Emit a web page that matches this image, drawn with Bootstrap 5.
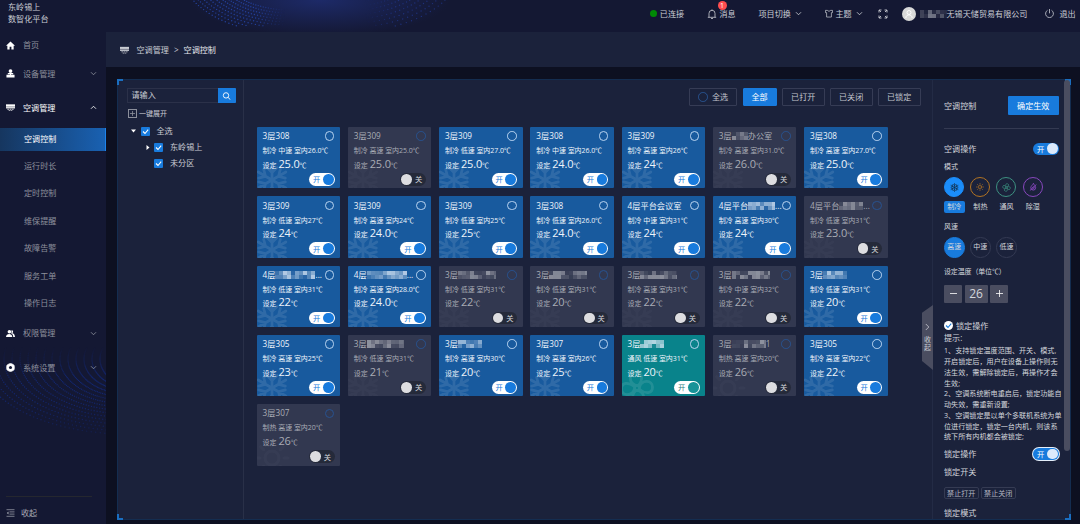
<!DOCTYPE html>
<html lang="zh-CN">
<head>
<meta charset="utf-8">
<title>空调控制</title>
<meta name="viewport" content="width=device-width, initial-scale=1">
<link href="https://cdn.jsdelivr.net/npm/bootstrap@5.3.0/dist/css/bootstrap.min.css" rel="stylesheet">
<style>
:root{--blue:#187bdd;--panel:#1b223b;--line:#303650}
html,body{height:100%}
body{background:#0d1021;color:#c9ccd3;font:8.1px/12px "Open Sans","Noto Sans CJK SC",sans-serif;overflow:hidden}
svg{display:block;flex:none}
.app{width:1080px;height:524px}
.topbar{height:32px;background:#141833;position:relative;flex:none}
.topbar>*{position:relative}
.topbar .wave{position:absolute;left:0;top:0}
.brand{width:648.5px;padding-left:8px;padding-top:1px;line-height:12.4px}
.topbar .seg{height:27px;white-space:nowrap}
.dot-on{width:7px;height:7px;border-radius:50%;background:#008a05;margin:0 3.3px 0 1px}
.msg-badge{position:absolute;left:11px;top:.5px;width:9px;height:9px;border-radius:50%;background:#ff4d4f;color:#fff;font-size:7px;line-height:9px;text-align:center}
.side{width:106px;background:#141833;position:relative;flex:none;color:#8d909c}
.side .wave{position:absolute;left:0;top:285px}
.side .row-item{position:relative;height:27.4px;padding-left:6px;padding-right:9px}
.side .row-item svg.ico{width:9px;height:9px;margin-right:8px}
.side .sub{padding-left:24px}
.side .current{height:23px;margin:6px 0 1.7px;color:#fff;background:linear-gradient(90deg,#16365f,#1961b2);border-right:1px solid #1e83ea}
.side .foot{margin:auto 14px 0 6px;border-top:1px solid #25272f;height:28px;color:#a8abb5;padding-top:5px}
.crumb{height:35px;background:var(--panel);padding-left:14px;flex:none}
.crumb-on{color:#e6e8ec}
.board{width:954px;height:441px;margin:12px 0 0 11px;background:var(--panel);border:1px solid #142d50;position:relative;flex:none}
.corner{position:absolute;width:6px;height:6px;border:0 solid #1a6ec0}
.tree{width:126px;border-right:1px solid #293048;padding:8px 0 0 9px;flex:none}
.search{width:108.5px;height:15px;border:1px solid #2b3149;margin-bottom:6px}
.search .go{width:18px;height:15px;margin:-1px;background:var(--blue);border-radius:0 1px 1px 0;padding:3.5px 4.5px}
.search .hint{padding-left:3.5px;flex:1;line-height:12px}
.plus{width:9px;height:9px;border:1px solid #8b8f9b;position:relative;margin:0 2px 0 1px}
.plus svg{position:absolute;left:1px;top:1px}
.tick{width:9px;height:9px;background:var(--blue);border-radius:1px;padding:1px}
.tree .node{height:16px}
.list{width:689px;padding:8px 0 0 13px;flex:none;border-right:1px solid #232b45}
.filters{padding-right:11.5px;gap:5.3px;height:18px}
.flt{height:18px;border:1px solid #363c55;line-height:16.5px;text-align:center;width:42.7px;padding:0;border-radius:1px;background:none;color:#c2c5cd;font-size:8.1px}
.flt.on{background:var(--blue);border-color:var(--blue);color:#fff;width:34px}
.ring{width:9.6px;height:9.6px;border:1px solid #b8d3f0;border-radius:50%;flex:none}
.ring.dim{border-color:#28528f}
.units{display:grid;grid-template-columns:repeat(7,83.4px);gap:8px 7.87px;margin-top:21.2px;margin-left:-.4px}
.unit{height:61.3px;background:#185a9e;color:#eef4fb;border-radius:1px;position:relative;padding:4.1px 5.6px 0 6px;overflow:hidden;white-space:nowrap}
.unit.off{background:#323850;color:#a9acb5}
.unit.fan{background:#09838b}
.unit .bg-ico{position:absolute;left:-3px;bottom:-10px;opacity:.1;color:#fff}
.unit.off .bg-ico{opacity:.025}
.unit .ttl{height:10px;line-height:10px;font-size:8.2px}
.unit .inf{font-size:7px;line-height:10px;margin-top:5px;letter-spacing:-.06px;position:relative}
.unit .tmp{font-size:7px;line-height:14px;margin-top:.6px;position:relative}
.unit .tmp b{font-weight:400;font-size:11px;letter-spacing:-.15px}
.sw{width:25.5px;height:12.6px;border-radius:7px;background:#fff;color:#187bdd;font-size:7.3px;padding:0 1px 0 4px}
.sw i{width:10.8px;height:10.8px;border-radius:50%;background:var(--blue)}
.unit .sw{position:absolute;right:5.4px;top:45.9px}
.unit.off .sw{background:#252a3a;color:#d5d7dc;flex-direction:row-reverse;padding:0 3.5px 0 1px}
.unit.off .sw i{background:#dddde0}
.unit.fan .sw{color:#2a7f83}.unit.fan .sw i{background:#189398}
.ctrl{width:137px;padding:16px 0 0 11px;position:relative;flex:none;overflow:hidden;color:#d4d6dc}
.inner{width:114.5px}
.apply{width:50.5px;height:19px;background:var(--blue);color:#fff;line-height:18px;text-align:center;border-radius:1px;border:0;font-size:8.1px;padding:0}
.sw.blue{background:var(--blue);color:#fff}.sw.blue i{background:#dceafb}
.sw.ringed{box-shadow:0 0 0 1px #e5effa}
.t7{font-size:7px}
.mode{width:26.2px}
.mode .cir{width:20px;height:20px;border:1px solid;border-radius:50%;margin-bottom:4px}
.mode .cap{line-height:11px;height:11.5px;width:20.5px;text-align:center;border-radius:2px;font-size:7.1px}
.spd{width:20.5px;height:20.5px;border:1px solid #343a53;border-radius:50%;font-size:7px;margin-right:5.6px}
.spd.on{background:var(--blue);border-color:var(--blue)}
.step{height:18px;background:#4a4d60;width:18px;border-radius:1px}
.step.val{width:23px;font-size:12px;margin:0 2.5px}
.tips{font-size:7.1px;line-height:10.75px;white-space:nowrap;margin-top:1.5px}
.tag{border:1px solid #353b53;border-radius:2px;height:12px;line-height:10px;width:34.5px;text-align:center;font-size:7.1px;margin-right:2.5px;color:#b5b8c2}
.thumb{position:absolute;right:0;top:0;width:6px;background:#4a4d60;border-radius:3px}
.handle{position:absolute;left:804px;top:225px;width:11px;height:65px;background:#4a4d60;clip-path:polygon(100% 0,100% 100%,0 86%,0 12%);font-size:7px;line-height:7.5px;padding-top:18px}
</style>
</head>
<body>
<svg width="0" height="0" style="position:absolute">
  <symbol id="flake" viewBox="0 0 36 36"><g fill="none" stroke="currentColor" stroke-width="2.700" stroke-linecap="round"><g id="arm"><path d="M18 18V2M13 5.500l5 5 5-5"/></g><use href="#arm" transform="rotate(60 18 18)"/><use href="#arm" transform="rotate(120 18 18)"/><use href="#arm" transform="rotate(180 18 18)"/><use href="#arm" transform="rotate(240 18 18)"/><use href="#arm" transform="rotate(300 18 18)"/></g></symbol>
  <symbol id="sun" viewBox="0 0 36 36"><g fill="none" stroke="currentColor" stroke-width="3" stroke-linecap="round"><circle cx="18" cy="18" r="7"/><path d="M18 2v4M18 30v4M2 18h4M30 18h4M6.700 6.700l3 3M26.300 26.300l3 3M6.700 29.300l3-3M26.300 9.700l3-3"/></g></symbol>
  <symbol id="fan" viewBox="0 0 36 36"><g fill="none" stroke="currentColor" stroke-width="2.800" stroke-linejoin="round"><circle cx="18" cy="18" r="2.500"/><path id="bl" d="M17 15.500C9 13 10 2.500 17 2.500c7 0 7 7 2.500 13"/><use href="#bl" transform="rotate(90 18 18)"/><use href="#bl" transform="rotate(180 18 18)"/><use href="#bl" transform="rotate(270 18 18)"/></g></symbol>
  <symbol id="drop" viewBox="0 0 36 36"><g fill="none" stroke="currentColor" stroke-width="4" stroke-linecap="round"><path d="M20 3c5 7 10 12 10 18a11 11 0 0 1-22 0C8 15 15 10 20 3ZM5 33 32 8M14 23l7-7M17 29l9-9"/></g></symbol>
  <symbol id="down" viewBox="0 0 8 6"><path d="m1 1.500 3 3 3-3" fill="none" stroke="currentColor"/></symbol>
  <symbol id="check" viewBox="0 0 7 7"><path d="m1 3.500 2 2 3.200-3.800" fill="none" stroke="currentColor" stroke-width="1.100"/></symbol>
  <symbol id="ac" viewBox="0 0 10 8"><path d="M0 .500h10v4.500H0z" fill="currentColor"/><path d="M0 3.300h10" stroke="#141833" stroke-width=".5"/><path d="M1.500 6h7M3 7.500h4" stroke="currentColor" stroke-width=".8" stroke-dasharray="2 .6"/></symbol>
</svg>
<div class="app d-flex flex-column">
  <header class="topbar d-flex">
    <svg class="wave" id="topWave" width="640" height="32"></svg>
    <div class="brand">东岭锡上<br>数智化平台</div>
    <div class="seg d-flex align-items-center" style="width:58px"><span class="dot-on"></span>已连接</div>
    <div class="seg d-flex align-items-center" style="width:52px"><svg width="10" height="10" viewBox="0 0 10 10" fill="none" stroke="currentColor" stroke-width=".8"><path d="M.8 8.300h8.400M2 8.300V4.300a3 3 0 0 1 6 0v4M4 9.500h2M5 .400v1"/></svg><span style="margin-left:3px">消息</span><span class="msg-badge">1</span></div>
    <div class="seg d-flex align-items-center" style="width:66px">项目切换<svg class="ms-1" width="7" height="5"><use href="#down"/></svg></div>
    <div class="seg d-flex align-items-center" style="width:53px"><svg width="8" height="9" viewBox="0 0 9 9" fill="none" stroke="currentColor" stroke-width=".8"><path d="M.5 1h2.300c.4 1.200 3 1.200 3.400 0h2.300v2.500H7.200v5H1.800v-5H.5z"/></svg><span style="margin-left:3px">主题</span><svg class="ms-1" width="7" height="5"><use href="#down"/></svg></div>
    <div class="seg d-flex align-items-center" style="width:24px"><svg width="10" height="10" viewBox="0 0 10 10" fill="none" stroke="currentColor"><path d="M1 3.500V1h2.500M6.500 1H9v2.500M9 6.500V9H6.500M3.500 9H1V6.500M1 1l2 2M9 1 7 3M9 9 7 7M1 9l2-2" stroke-width=".9"/></svg></div>
    <div class="seg d-flex align-items-center" style="width:143px"><svg width="14" height="14" viewBox="0 0 14 14"><circle cx="7" cy="7" r="7" fill="#d9d9d9"/><g fill="none" stroke="#fff" stroke-width=".9"><circle cx="7" cy="5.500" r="2"/><path d="M3.800 11c.3-4.200 6.100-4.200 6.400 0"/></g></svg><span class="mosaic ms-1" data-w="27" data-c="#8c8f9c"></span>无锡天储贸易有限公司</div>
    <div class="seg d-flex align-items-center"><svg width="9" height="9" viewBox="0 0 9 9" fill="none" stroke="currentColor" stroke-width=".8"><path d="M2.500 1.300a3.900 3.900 0 1 0 4 0M4.500 0v4.300"/></svg><span style="margin-left:6px">退出</span></div>
  </header>
  <div class="d-flex flex-fill">
    <aside class="side d-flex flex-column">
      <svg class="wave" id="sideWave" width="106" height="150"></svg>
      <div class="row-item d-flex align-items-center" style="margin-top:-.5px"><svg class="ico" viewBox="0 0 10 10" fill="#fff"><path d="M5 .5 0 5.200h1.500V9.500H4V6.500h2v3h2.500V5.200H10z"/></svg>首页</div>
      <div class="row-item d-flex align-items-center" style="margin-top:1px"><svg class="ico" viewBox="0 0 10 10" fill="#fff"><circle cx="5" cy="2.300" r="2.100"/><path d="M2 4.500h6v1.200H2zM4.400 5h1.200v2H4.400zM.5 6.500h9v3h-9z"/></svg>设备管理<svg class="ms-auto" width="7" height="5"><use href="#down"/></svg></div>
      <div class="row-item d-flex align-items-center text-white" style="margin-top:7px"><svg class="ico" viewBox="0 0 10 8"><use href="#ac"/></svg>空调管理<svg class="ms-auto" width="7" height="5" style="transform:rotate(180deg)"><use href="#down"/></svg></div>
      <div class="row-item sub current d-flex align-items-center">空调控制</div>
      <div class="row-item sub d-flex align-items-center">运行时长</div>
      <div class="row-item sub d-flex align-items-center">定时控制</div>
      <div class="row-item sub d-flex align-items-center">维保提醒</div>
      <div class="row-item sub d-flex align-items-center">故障告警</div>
      <div class="row-item sub d-flex align-items-center">服务工单</div>
      <div class="row-item sub d-flex align-items-center">操作日志</div>
      <div class="row-item d-flex align-items-center" style="margin-top:3px"><svg class="ico" viewBox="0 0 10 10" fill="#fff"><circle cx="3.800" cy="3" r="2"/><path d="M0 9c0-4.500 7-4.500 7 0zM6.300 1.200a1.900 1.900 0 0 1 .5 3.600C8.800 5 9.800 6.500 10 9H8C8 7 7.500 6 6 5.200z"/></svg>权限管理<svg class="ms-auto" width="7" height="5"><use href="#down"/></svg></div>
      <div class="row-item d-flex align-items-center" style="margin-top:7px"><svg class="ico" viewBox="0 0 10 10"><path d="M3 1.200 5 .5l2 .7 2 1.300.3 2.500L9 7.500 7 8.800l-2 .7-2-.7L1 7.500.7 5 1 2.500z" fill="#fff" stroke="#fff" stroke-width=".8" stroke-linejoin="round"/><circle cx="5" cy="5" r="1.700" fill="#141833"/></svg>系统设置<svg class="ms-auto" width="7" height="5"><use href="#down"/></svg></div>
      <div class="foot d-flex align-items-center"><svg width="9" height="8" viewBox="0 0 9 8" fill="none" stroke="currentColor" stroke-width=".7"><path d="M.5.700h8M3.500 2.900h5M3.500 5.100h5M.5 7.300h8"/><path d="M2.500 2.500v3L.8 4z" fill="currentColor" stroke="none"/></svg><span style="margin-left:6px">收起</span></div>
    </aside>
    <main class="flex-fill">
      <div class="crumb d-flex align-items-center"><svg width="9" height="8" style="margin-right:7.500px"><use href="#ac"/></svg>空调管理<span style="margin:0 5px">&gt;</span><span class="crumb-on">空调控制</span></div>
      <div class="board d-flex">
        <span class="corner" style="left:-1px;top:-1px;border-width:2px 0 0 2px"></span>
        <span class="corner" style="right:-1px;top:-1px;border-width:2px 2px 0 0"></span>
        <span class="corner" style="left:-1px;bottom:-1px;border-width:0 0 2px 2px"></span>
        <span class="corner" style="right:-1px;bottom:-1px;border-width:0 2px 2px 0"></span>
        <section class="tree">
          <div class="search d-flex"><span class="hint">请输入</span><span class="go"><svg width="9" height="8" viewBox="0 0 9 8" fill="none" stroke="#fff" stroke-width=".9"><circle cx="4" cy="3.400" r="2.700"/><path d="m6 5.400 2.400 2.300"/></svg></span></div>
          <div class="d-flex align-items-center t7 mb-1" style="height:9px"><span class="plus"><svg width="5" height="5"><path d="M0 2.500h5M2.500 0v5" stroke="#8b8f9b" stroke-width=".8"/></svg></span>一键展开</div>
          <div class="node d-flex align-items-center" style="padding-left:4px;margin-top:5px"><svg width="5" height="4"><path d="M0 .5h5L2.500 3.500z" fill="#fff"/></svg><span class="tick" style="margin:0 7px 0 4.500px"><svg width="7" height="7" class="text-white"><use href="#check"/></svg></span>全选</div>
          <div class="node d-flex align-items-center" style="padding-left:18.500px"><svg width="4" height="5"><path d="M.5 0v5L3.500 2.500z" fill="#fff"/></svg><span class="tick" style="margin:0 7px 0 4.500px"><svg width="7" height="7" class="text-white"><use href="#check"/></svg></span>东岭锡上</div>
          <div class="node d-flex align-items-center" style="padding-left:27px"><span class="tick" style="margin-right:7px"><svg width="7" height="7" class="text-white"><use href="#check"/></svg></span>未分区</div>
        </section>
        <section class="list">
          <div class="filters d-flex justify-content-end">
            <div class="flt d-flex align-items-center justify-content-center" style="width:48px"><span class="ring dim me-1"></span>全选</div>
            <button class="flt on">全部</button><button class="flt">已打开</button><button class="flt">已关闭</button><button class="flt">已锁定</button>
          </div>
          <div class="units" id="units"></div>
        </section>
        <div class="handle d-flex flex-column align-items-center"><svg width="5" height="8" viewBox="0 0 5 8" fill="none" stroke="#c9ccd3" stroke-width=".8"><path d="m.8 1 3 3-3 3"/></svg><span style="margin-top:5px">收<br>起</span></div>
        <section class="ctrl">
          <span class="thumb" style="height:371px"></span>
          <div class="inner">
            <div class="d-flex align-items-center justify-content-between" style="padding-bottom:13px;border-bottom:1px solid #343a52"><span>空调控制</span><button class="apply">确定生效</button></div>
            <div class="d-flex align-items-center justify-content-between" style="margin-top:13.500px"><span>空调操作</span><span class="sw blue d-flex align-items-center justify-content-between">开<i></i></span></div>
            <div class="t7" style="margin-top:6px">模式</div>
            <div class="d-flex" style="margin-top:4px">
              <div class="mode"><div class="cir d-flex align-items-center justify-content-center" style="background:#1b8dfa;border-color:#1b8dfa"><svg width="9" height="9" style="color:#12314f"><use href="#flake"/></svg></div><div class="cap" style="background:var(--blue)">制冷</div></div>
              <div class="mode"><div class="cir d-flex align-items-center justify-content-center" style="color:#b27322"><svg width="8" height="8"><use href="#sun"/></svg></div><div class="cap">制热</div></div>
              <div class="mode"><div class="cir d-flex align-items-center justify-content-center" style="color:#3d9181"><svg width="9" height="9" style="transform:rotate(20deg)"><use href="#fan"/></svg></div><div class="cap">通风</div></div>
              <div class="mode"><div class="cir d-flex align-items-center justify-content-center" style="color:#8747bd"><svg width="8" height="8"><use href="#drop"/></svg></div><div class="cap">除湿</div></div>
            </div>
            <div class="t7" style="margin-top:8.500px">风速</div>
            <div class="d-flex" style="margin-top:4px"><span class="spd on d-flex align-items-center justify-content-center">高速</span><span class="spd d-flex align-items-center justify-content-center">中速</span><span class="spd d-flex align-items-center justify-content-center">低速</span></div>
            <div class="t7" style="margin-top:8.500px;white-space:nowrap;letter-spacing:-.15px">设定温度（单位℃）</div>
            <div class="d-flex" style="margin-top:6.500px"><span class="step d-flex align-items-center justify-content-center"><svg width="7" height="7"><path d="M0 3.500h7" stroke="#fff" stroke-width=".8"/></svg></span><span class="step val d-flex align-items-center justify-content-center">26</span><span class="step d-flex align-items-center justify-content-center"><svg width="7" height="7"><path d="M0 3.500h7M3.500 0v7" stroke="#fff" stroke-width=".8"/></svg></span></div>
            <div class="d-flex align-items-center" style="margin-top:17.200px"><svg width="9" height="9" viewBox="-1 -1 9 9" style="margin-right:3px;color:#187bdd"><circle cx="3.500" cy="3.500" r="4.500" fill="#fff"/><use href="#check" width="7" height="7"/></svg>锁定操作</div>
            <div>提示:</div>
            <div class="tips">1、支持锁定温度范围、开关、模式,<br>开启锁定后，用户在设备上操作则无<br>法生效，需解除锁定后，再操作才会<br>生效;<br>2、空调系统断电重启后，锁定功能自<br>动失效，需重新设置;<br>3、空调锁定是以单个多联机系统为单<br>位进行锁定，锁定一台内机，则该系<br>统下所有内机都会被锁定;</div>
            <div class="d-flex align-items-center justify-content-between" style="margin-top:5.600px"><span>锁定操作</span><span class="sw blue ringed d-flex align-items-center justify-content-between">开<i></i></span></div>
            <div style="margin-top:6px">锁定开关</div>
            <div class="d-flex" style="margin-top:8.700px"><span class="tag">禁止打开</span><span class="tag">禁止关闭</span></div>
            <div style="margin-top:8.500px">锁定模式</div>
          </div>
        </section>
      </div>
    </main>
  </div>
</div>
<script src="https://cdn.jsdelivr.net/npm/bootstrap@5.3.0/dist/js/bootstrap.bundle.min.js"></script>
<script>
// name | redacted width | name tail | info | set temperature | state
const units = `3层308|0||制冷 中速 室内26.0℃|25.0|on
3层309|0||制冷 高速 室内25.0℃|25.0|off
3层309|0||制冷 低速 室内27.0℃|25.0|on
3层308|0||制冷 中速 室内26.0℃|24.0|on
3层309|0||制冷 高速 室内26℃|24|on
3层|16|办公室|制冷 高速 室内31.0℃|26.0|off
3层308|0||制冷 高速 室内27.0℃|25.0|on
3层309|0||制冷 低速 室内27℃|24|on
3层309|0||制冷 高速 室内24℃|24.0|on
3层309|0||制冷 低速 室内25℃|25|on
3层308|0||制冷 低速 室内26.0℃|24.0|on
4层平台会议室|0||制冷 中速 室内31℃|24|on
4层平台|27|...|制冷 高速 室内30℃|24|on
4层平台|24|...|制冷 低速 室内31℃|23.0|off
4层|40|...|制冷 低速 室内31℃|22|on
4层|40|...|制冷 高速 室内28.0℃|24.0|on
3层|38||制冷 低速 室内31℃|22|off
3层|38||制冷 低速 室内31℃|20|off
3层|37||制冷 高速 室内31℃|22|off
3层|38||制冷 中速 室内32℃|22|off
3层|24||制冷 低速 室内31℃|20|on
3层305|0||制冷 高速 室内25℃|23|on
3层|37||制冷 低速 室内31℃|21|off
3层|24||制冷 高速 室内30℃|20|on
3层307|0||制冷 高速 室内26℃|25|on
3层|24||通风 低速 室内31℃|20|on fan
3层|34|1|制热 高速 室内20℃|26|off
3层305|0||制冷 高速 室内22℃|22|on
3层307|0||制热 高速 室内20℃|26|off`.split('\n').map(r => r.split('|'));
let seed = 7;
const rnd = () => (seed = seed * 16807 % 2147483647) / 2147483647;
function mosaic(w, color) {
  let s = '';
  for (let x = 0; x < w; x += 4) for (let y = 0; y < 8; y += 4)
    s += `<rect x="${x}" y="${y}" width="4" height="4" fill="${color}" opacity="${(rnd() * .75 + .05).toFixed(2)}"/>`;
  return `<svg width="${w}" height="8">${s}</svg>`;
}
document.getElementById('units').innerHTML = units.map(([n, m, tail, info, t, st]) => {
  const off = st === 'off', ico = st.includes('fan') ? 'fan' : info.startsWith('制热') ? 'sun' : 'flake';
  return `<div class="unit ${st}"><svg class="bg-ico" width="36" height="36"><use href="#${ico}"/></svg>
  <div class="ttl d-flex align-items-center">${n}${+m ? mosaic(+m, off ? '#a4a7b1' : '#e4eefa') : ''}${tail}<span class="ring ms-auto ${off ? 'dim' : ''}"></span></div>
  <div class="inf">${info}</div><div class="tmp">设定 <b>${t}</b>℃</div>
  <span class="sw d-flex align-items-center justify-content-between">${off ? '关' : '开'}<i></i></span></div>`;
}).join('');
document.querySelectorAll('.mosaic').forEach(e => e.innerHTML = mosaic(+e.dataset.w, e.dataset.c));
// dotted arcs of the decorative background
function arcs(cx, cy, rx, ry, n, step, ratio, dots, color, clipL, clipR, maxY) {
  let s = '';
  for (let i = 0; i < n; i++) {
    const a = rx + i * step, b = ry + i * step * ratio;
    for (let k = 0; k < dots; k++) {
      const th = k / dots * Math.PI * 2, x = cx + a * Math.cos(th), y = cy + b * Math.sin(th);
      if (x < clipL || x > clipR || y < -1 || y > maxY) continue;
      const f = Math.min(1, (x - clipL) / 30, (clipR - x) / 30);
      s += `<circle cx="${x.toFixed(1)}" cy="${y.toFixed(1)}" r=".7" fill="${color}" opacity="${f.toFixed(2)}"/>`;
    }
  }
  return s;
}
document.getElementById('topWave').innerHTML =
  `<defs><radialGradient id="glow"><stop offset="0" stop-color="#1d2a68"/><stop offset="1" stop-color="#1d2a68" stop-opacity="0"/></radialGradient></defs>
  <ellipse cx="320" cy="0" rx="130" ry="36" fill="url(#glow)"/>` +
  arcs(290, -30, 70, 40, 9, 5, .6, 160, '#24409a', 165, 285, 26) + arcs(350, -30, 60, 32, 8, 7, .6, 110, '#1e3078', 365, 468, 26);
document.getElementById('sideWave').innerHTML =
  `<defs><linearGradient id="fg" x2="0" y2="1"><stop offset=".2" stop-color="#fff" stop-opacity="0"/><stop offset=".42" stop-color="#fff"/><stop offset=".6" stop-color="#fff" stop-opacity=".9"/><stop offset=".95" stop-color="#fff" stop-opacity="0"/></linearGradient><mask id="fm"><rect width="106" height="150" fill="url(#fg)"/></mask></defs>
  <g mask="url(#fm)">` + arcs(128, 42, 12, 18, 18, 8, .42, 200, '#14276e', -30, 136, 150) + '</g>';
</script>
</body>
</html>
